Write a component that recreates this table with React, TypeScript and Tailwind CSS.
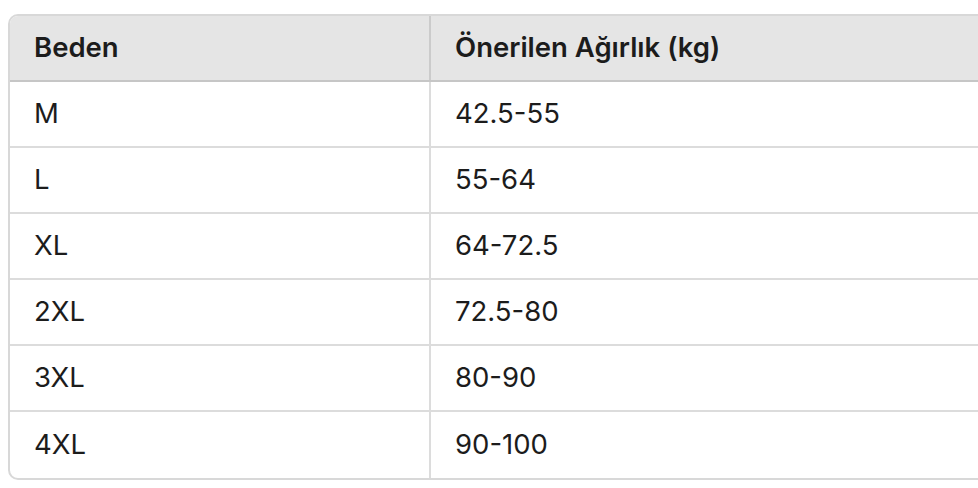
import React from 'react';

const rows = [
  { size: 'M', weight: '42.5-55' },
  { size: 'L', weight: '55-64' },
  { size: 'XL', weight: '64-72.5' },
  { size: '2XL', weight: '72.5-80' },
  { size: '3XL', weight: '80-90' },
  { size: '4XL', weight: '90-100' },
];

export default function App() {
  return (
    <div
      className="min-h-screen w-full overflow-hidden bg-white pt-[14px] pl-[8px] text-[#1c1c1c]"
      style={{ fontFamily: 'Inter, "Noto Sans", sans-serif' }}
    >
      <div className="w-[1000px] overflow-hidden rounded-[10px] border-2 border-[#d8d8d8]">
        {/* Header */}
        <div className="grid h-[66px] grid-cols-[421px_1fr] border-b-2 border-[#c6c6c6] bg-[#e5e5e5] text-[27.5px] font-semibold">
          <div className="flex items-center border-r-2 border-[#cbcbcb] pl-[24px]">Beden</div>
          <div className="flex items-center pl-[24px]">Önerilen Ağırlık (kg)</div>
        </div>

        {rows.map((row, i) => (
          <div
            key={row.size}
            className={
              'grid h-[66px] grid-cols-[421px_1fr] text-[27.5px] ' +
              (i < rows.length - 1 ? 'border-b-2 border-[#dcdcdc]' : '')
            }
          >
            <div className="flex items-center border-r-2 border-[#dcdcdc] pl-[24px]">{row.size}</div>
            <div className="flex items-center pl-[24px]">{row.weight}</div>
          </div>
        ))}
      </div>
    </div>
  );
}
